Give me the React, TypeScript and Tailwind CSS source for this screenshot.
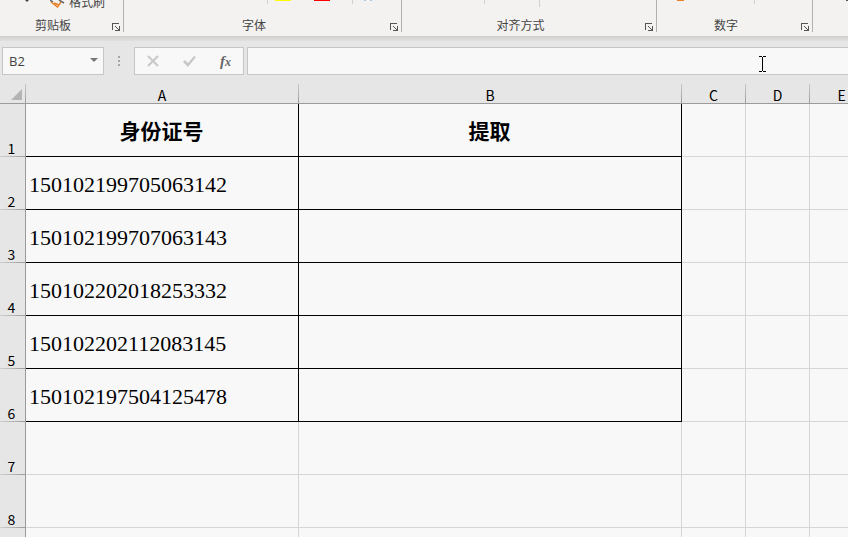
import React from 'react';

interface RibbonGroupProps {
  label: string;
  className: string;
  children?: React.ReactNode;
}

const columns = [
  { name: 'A', width: 'w-[273px]' },
  { name: 'B', width: 'w-[383px]' },
  { name: 'C', width: 'w-16' },
  { name: 'D', width: 'w-16' },
  { name: 'E', width: 'w-16' },
];

const rows: string[][] = [
  ['身份证号', '提取'],
  ['150102199705063142', ''],
  ['150102199707063143', ''],
  ['150102202018253332', ''],
  ['150102202112083145', ''],
  ['150102197504125478', ''],
  [],
  [],
];

const LauncherIcon = () => (
  <svg width="9" height="9" viewBox="0 0 9 9" fill="none" stroke="#555" shapeRendering="crispEdges">
    <path d="M0.5 7V0.5H7" />
    <path d="M3 3l4 4" shapeRendering="auto" />
    <path d="M7.5 3v5M3 7.5h5" />
  </svg>
);

const RibbonGroup = ({ label, className, children }: RibbonGroupProps) => (
  <section className={`flex h-8 shrink-0 flex-col border-r border-[#b3b1af] ${className}`}>
    <div className="flex h-4 items-start overflow-hidden">{children}</div>
    <div className="flex h-4 items-end">
      <h2 className="flex-1 pr-[6px] text-center text-xs leading-[14px]">{label}</h2>
      <button aria-label={`${label}设置`} className="mr-[2px] shrink-0">
        <LauncherIcon />
      </button>
    </div>
  </section>
);

const Ribbon = () => (
  <header className="flex h-9 overflow-hidden bg-[#f3f2f1] text-[#444]">
    <RibbonGroup label="剪贴板" className="w-[124px]">
      <svg className="ml-6 shrink-0" width="6" height="2" viewBox="0 0 6 2">
        <path d="M1 0h4L3 2z" fill="#444" />
      </svg>
      <button className="ml-5 flex items-start gap-1 text-xs">
        <svg width="15" height="8" viewBox="0 0 15 8" fill="none">
          <path d="M1 2l6.5 5L11 2M4 3l5 2" stroke="#e8822a" strokeWidth="1.5" />
          <path d="M0 0l3 2M9 0l5 3" stroke="#666" strokeWidth="1.5" />
        </svg>
        <span className="-mt-1 leading-3">格式刷</span>
      </button>
    </RibbonGroup>
    <RibbonGroup label="字体" className="w-[278px]">
      <span className="ml-[143px] h-1 w-px bg-[#d2d0ce]" />
      <span className="ml-[7px] h-px w-4 bg-[#ffff00]" />
      <span className="ml-[23px] h-px w-4 bg-[#ff0000]" />
      <span className="ml-[22px] h-1 w-px bg-[#d2d0ce]" />
      <span className="ml-[11px] h-px w-[2px] bg-[#a9c8e6]" />
      <span className="ml-1 h-px w-[2px] bg-[#a9c8e6]" />
    </RibbonGroup>
    <RibbonGroup label="对齐方式" className="w-[255px]">
      <span className="ml-[82px] h-1 w-px bg-[#d2d0ce]" />
      <span className="ml-[54px] h-[7px] w-px bg-[#d2d0ce]" />
    </RibbonGroup>
    <RibbonGroup label="数字" className="w-[156px]">
      <span className="ml-5 h-px w-[7px] bg-[#e8822a]" />
      <span className="ml-[70px] h-1 w-px bg-[#d2d0ce]" />
    </RibbonGroup>
    <span className="ml-[33px] h-px w-[2px] bg-[#555]" />
  </header>
);

const FormulaBar = () => (
  <div className="flex h-7 items-stretch pl-[2px] text-[#444]">
    <div className="relative w-[102px] shrink-0">
      <input
        aria-label="名称框"
        defaultValue="B2"
        className="h-full w-full border border-[#c6c6c6] bg-[#f8f8f8] pl-[6px] font-['Open_Sans','Noto_Sans',sans-serif] text-[13px] outline-none"
      />
      <button aria-label="展开名称框" className="absolute top-[11px] right-[6px]">
        <svg className="block" width="8" height="4" viewBox="0 0 8 4">
          <path d="M0 0h8L4 4z" fill="#777" />
        </svg>
      </button>
    </div>
    <div className="flex w-[30px] shrink-0 flex-col items-center justify-center gap-[2px]">
      <span className="size-[2px] bg-[#a6a6a6]" />
      <span className="size-[2px] bg-[#a6a6a6]" />
      <span className="size-[2px] bg-[#a6a6a6]" />
    </div>
    <div className="flex w-[110px] shrink-0 items-center justify-around border border-[#c6c6c6] bg-[#f8f8f8]">
      <button aria-label="取消">
        <svg width="12" height="12" viewBox="0 0 12 12" fill="none" stroke="#c8c8c8" strokeWidth="2">
          <path d="M1 1l10 10M11 1L1 11" />
        </svg>
      </button>
      <button aria-label="输入">
        <svg width="13" height="12" viewBox="0 0 13 12" fill="#c8c8c8">
          <path d="M0 7l2-2 3 3 6-7 2 1-8 10z" />
        </svg>
      </button>
      <button
        aria-label="插入函数"
        className="flex items-baseline font-['Liberation_Serif',serif] text-[15px] leading-4 font-bold text-[#666] italic"
      >
        f<span className="text-xs leading-3">x</span>
      </button>
    </div>
    <input
      aria-label="编辑栏"
      className="ml-[3px] min-w-0 flex-1 border border-r-0 border-[#c6c6c6] bg-[#f8f8f8] px-2 text-xs outline-none"
    />
  </div>
);

const cellBorder = (row: number, col: number) => {
  if (row < 6 && col < 2) return 'border-black';
  return 'border-[#d6d6d6]';
};

const Sheet = () => (
  <table className="w-[874px] table-fixed border-separate border-spacing-0 text-black">
    <thead className="font-['Noto_Sans_CJK_SC',sans-serif] text-sm">
      <tr className="h-[29px]">
        <th className="w-[26px] border-b border-[#9b9b9b] p-0 align-bottom">
          <div className="flex h-[19px] items-start justify-end gap-[3px]">
            <svg className="mt-[5px]" width="11" height="11" viewBox="0 0 11 11">
              <path d="M11 0v11H0z" fill="#b4b4b4" />
            </svg>
            <span className="h-full w-px bg-linear-to-b from-[#c8c8c8] to-[#9b9b9b]" />
          </div>
        </th>
        {columns.map((column) => (
          <th key={column.name} className={`${column.width} border-b border-[#9b9b9b] p-0 align-bottom font-normal`}>
            <div className="flex h-[19px]">
              <span className="flex-1 pt-[3px] leading-4">{column.name}</span>
              <span className="w-px bg-linear-to-b from-[#c8c8c8] to-[#9b9b9b]" />
            </div>
          </th>
        ))}
      </tr>
    </thead>
    <tbody>
      {rows.map((cells, row) => (
        <tr key={row} className="h-[53px]">
          <th className="border-r border-[#9b9b9b] p-0 align-bottom font-['Noto_Sans_CJK_SC',sans-serif] text-sm leading-4 font-normal">
            <div className="pr-[2px]">{row + 1}</div>
            <div className="h-px bg-linear-to-r from-[#d0d0d0] to-[#9b9b9b]" />
          </th>
          {columns.map((column, col) => (
            <td
              key={column.name}
              className={`border-r border-b bg-[#f8f8f8] pt-1 pr-1 pb-0 pl-[3px] font-['Liberation_Serif','Noto_Sans_CJK_SC',serif] leading-7 ${cellBorder(row, col)} ${
                row === 0 ? 'text-center text-[21px] font-bold' : 'text-[22px]'
              }`}
            >
              {cells[col]}
            </td>
          ))}
        </tr>
      ))}
      {/* unlabelled strip that continues the grid below the last row */}
      <tr className="h-[53px]">
        <th className="border-r border-[#9b9b9b]" />
        {columns.map((column) => (
          <td key={column.name} className="border-r border-[#d6d6d6] bg-[#f8f8f8]" />
        ))}
      </tr>
    </tbody>
  </table>
);

const App = () => {
  return (
    <div className="relative h-screen overflow-hidden bg-[#e6e6e6] font-['Noto_Sans_CJK_SC',sans-serif]">
      <Ribbon />
      <div className="mb-[6px] h-[5px] bg-linear-to-b from-[#cfcfcf] to-[#e0e0e0]" />
      <FormulaBar />
      <Sheet />
      {/* mouse pointer over the formula bar */}
      <svg className="absolute top-14 left-[759px]" width="7" height="16" viewBox="0 0 7 16" shapeRendering="crispEdges">
        <path d="M0 0.5h3M4 0.5h3M3.5 1v14M0 15.5h3M4 15.5h3" stroke="#000" />
      </svg>
    </div>
  );
};

export default App;
